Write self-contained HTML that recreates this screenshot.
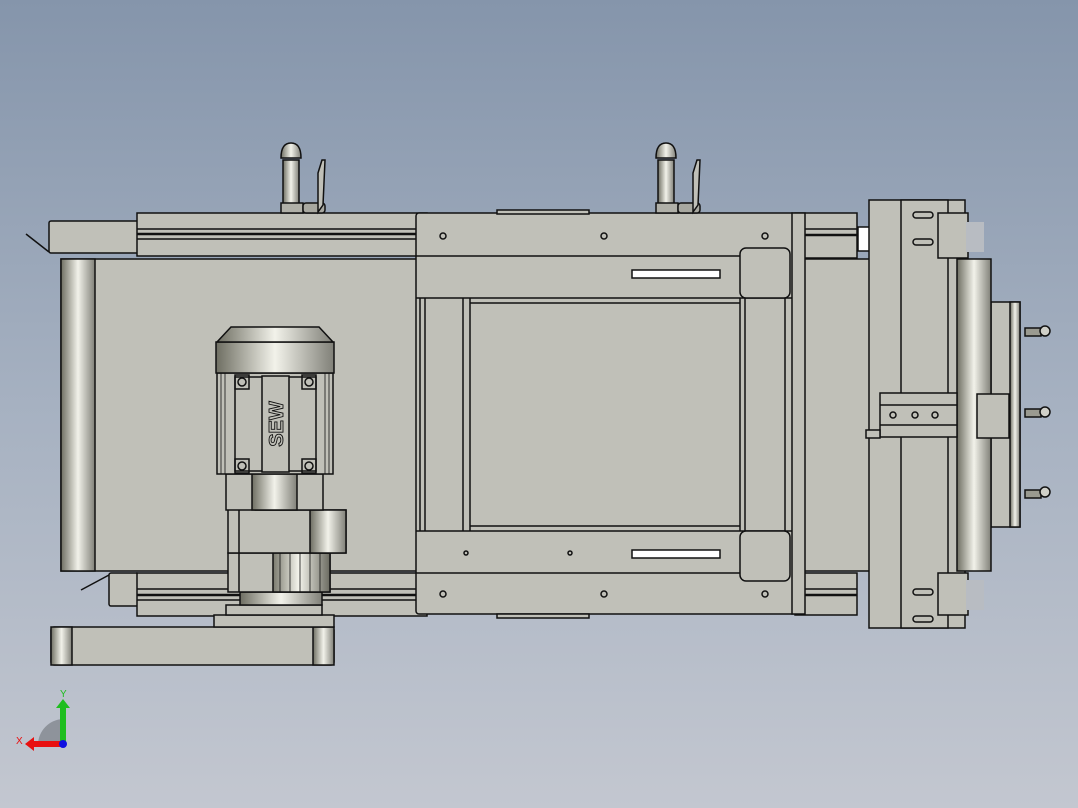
<!DOCTYPE html>
<html><head><style>
html,body{margin:0;padding:0;width:1078px;height:808px;overflow:hidden}
body{background:linear-gradient(#8595ab 0%,#a6b1c1 50%,#c3c7d0 100%)}
svg{position:absolute;left:0;top:0}
text{font-family:"Liberation Sans",sans-serif}
</style></head><body>
<svg width="1078" height="808" viewBox="0 0 1078 808" xmlns="http://www.w3.org/2000/svg">
<defs>
<linearGradient id="cylH" x1="0" x2="1" y1="0" y2="0">
<stop offset="0" stop-color="#6e6e62"/><stop offset=".5" stop-color="#f2f2ea"/><stop offset="1" stop-color="#808078"/></linearGradient>
<linearGradient id="cylH2" x1="0" x2="1" y1="0" y2="0">
<stop offset="0" stop-color="#7a7a6e"/><stop offset=".45" stop-color="#f4f4ec"/><stop offset="1" stop-color="#6a6a60"/></linearGradient>
</defs>
<g stroke="#111" stroke-width="1.5" fill="#c0c0b8">
<rect x="49" y="221" width="90" height="32" rx="2"/>
<line x1="26" y1="234" x2="49" y2="252"/>
<rect x="109" y="573" width="30" height="33" rx="2"/>
<line x1="81" y1="590" x2="109" y2="575"/>
<rect x="137" y="213" width="290" height="43"/>
<line x1="137" y1="229" x2="420" y2="229"/><line x1="137" y1="234" x2="420" y2="234" stroke-width="2.5"/><line x1="137" y1="239" x2="420" y2="239"/>
<rect x="137" y="573" width="290" height="43"/>
<line x1="137" y1="589" x2="420" y2="589"/><line x1="137" y1="595" x2="420" y2="595" stroke-width="2.5"/><line x1="137" y1="600" x2="420" y2="600"/>
<rect x="795" y="213" width="62" height="45"/>
<line x1="805" y1="229" x2="857" y2="229"/><line x1="805" y1="235" x2="857" y2="235" stroke-width="2.5"/>
<rect x="795" y="573" width="62" height="42"/>
<line x1="805" y1="589" x2="857" y2="589"/><line x1="805" y1="595" x2="857" y2="595" stroke-width="2.5"/>
<rect x="858" y="227" width="14" height="24" fill="#fff"/>
<rect x="61" y="259" width="830" height="312"/>
<rect x="61" y="259" width="34" height="312" fill="url(#cylH)"/>
<rect x="869" y="200" width="96" height="428"/>
<rect x="901" y="200" width="47" height="428"/>
<rect x="938" y="213" width="30" height="45"/><rect x="938" y="573" width="30" height="42"/>
<rect x="913" y="212" width="20" height="6" rx="3"/><rect x="913" y="239" width="20" height="6" rx="3"/>
<rect x="913" y="589" width="20" height="6" rx="3"/><rect x="913" y="616" width="20" height="6" rx="3"/>
<rect x="966" y="222" width="18" height="30" fill="#b8bcc2" stroke="none"/>
<rect x="966" y="580" width="18" height="30" fill="#b8bcc2" stroke="none"/>
<rect x="991" y="302" width="29" height="225"/>
<rect x="1010" y="302" width="10" height="225" fill="url(#cylH)"/>
<rect x="957" y="259" width="34" height="312" fill="url(#cylH)"/>
<g fill="#9a9a90">
<rect x="1025" y="328" width="16" height="8"/><circle cx="1045" cy="331" r="5" fill="#d0d0c8"/>
<rect x="1025" y="409" width="16" height="8"/><circle cx="1045" cy="412" r="5" fill="#d0d0c8"/>
<rect x="1025" y="490" width="16" height="8"/><circle cx="1045" cy="492" r="5" fill="#d0d0c8"/>
</g>
<rect x="880" y="393" width="77" height="44"/>
<line x1="880" y1="405" x2="957" y2="405"/><line x1="880" y1="425" x2="957" y2="425"/>
<rect x="866" y="430" width="14" height="8"/>
<circle cx="893" cy="415" r="3" fill="none"/><circle cx="915" cy="415" r="3" fill="none"/><circle cx="935" cy="415" r="3" fill="none"/>
<rect x="977" y="394" width="32" height="44"/>
<rect x="416" y="213" width="380" height="401" rx="3"/>
<rect x="497" y="210" width="92" height="4"/>
<rect x="497" y="614" width="92" height="4"/>
<line x1="416" y1="298" x2="796" y2="298"/><line x1="416" y1="531" x2="796" y2="531"/>
<line x1="416" y1="256" x2="740" y2="256"/><line x1="416" y1="573" x2="740" y2="573"/>
<line x1="420" y1="298" x2="420" y2="531"/><line x1="425" y1="298" x2="425" y2="531"/>
<line x1="463" y1="298" x2="463" y2="531"/><line x1="470" y1="298" x2="470" y2="531"/>
<line x1="470" y1="303" x2="740" y2="303"/><line x1="470" y1="526" x2="740" y2="526"/>
<line x1="740" y1="298" x2="740" y2="531"/><line x1="745" y1="298" x2="745" y2="531"/><line x1="785" y1="298" x2="785" y2="531"/>
<rect x="740" y="248" width="50" height="50" rx="6"/>
<rect x="740" y="531" width="50" height="50" rx="6"/>
<rect x="632" y="270" width="88" height="8" fill="#fff"/>
<rect x="632" y="550" width="88" height="8" fill="#fff"/>
<rect x="792" y="213" width="13" height="401"/>
<g fill="none"><circle cx="443" cy="236" r="3"/><circle cx="604" cy="236" r="3"/><circle cx="765" cy="236" r="3"/>
<circle cx="443" cy="594" r="3"/><circle cx="604" cy="594" r="3"/><circle cx="765" cy="594" r="3"/>
<circle cx="466" cy="553" r="2"/><circle cx="570" cy="553" r="2"/></g>
<rect x="283" y="160" width="16" height="45" fill="url(#cylH)"/>
<path d="M281 158 Q281 143 291 143 Q301 143 301 158 Z" fill="url(#cylH)"/>
<rect x="281" y="203" width="22" height="10" fill="#b0b0a8"/>
<rect x="303" y="203" width="22" height="10" fill="#a8a8a0" rx="3"/>
<path d="M318 212 L318 173 L322 160 L325 160 L323 205 Z"/>
<rect x="658" y="160" width="16" height="45" fill="url(#cylH)"/>
<path d="M656 158 Q656 143 666 143 Q676 143 676 158 Z" fill="url(#cylH)"/>
<rect x="656" y="203" width="22" height="10" fill="#b0b0a8"/>
<rect x="678" y="203" width="22" height="10" fill="#a8a8a0" rx="3"/>
<path d="M693 212 L693 173 L697 160 L700 160 L698 205 Z"/>
<rect x="51" y="627" width="283" height="38" rx="3"/>
<rect x="51" y="627" width="21" height="38" fill="url(#cylH)"/>
<rect x="313" y="627" width="21" height="38" fill="url(#cylH)"/>
<rect x="214" y="615" width="120" height="12"/>
<rect x="226" y="605" width="96" height="10"/>
<rect x="240" y="592" width="82" height="13" fill="url(#cylH)"/>
<rect x="228" y="553" width="102" height="39"/>
<rect x="273" y="553" width="57" height="39" fill="url(#cylH2)"/>
<g stroke-width=".8"><line x1="280" y1="553" x2="280" y2="592"/><line x1="290" y1="553" x2="290" y2="592"/><line x1="300" y1="553" x2="300" y2="592"/><line x1="310" y1="553" x2="310" y2="592"/><line x1="320" y1="553" x2="320" y2="592"/></g>
<path d="M228 507 L248 505 L255 510 L346 510 L346 553 L228 553 Z"/>
<rect x="310" y="510" width="36" height="43" fill="url(#cylH)"/>
<line x1="239" y1="507" x2="239" y2="592"/>
<rect x="226" y="474" width="97" height="36"/>
<rect x="252" y="474" width="45" height="36" fill="url(#cylH)"/>
<rect x="217" y="373" width="116" height="101"/>
<g stroke-width=".8"><line x1="221" y1="373" x2="221" y2="474"/><line x1="225" y1="373" x2="225" y2="474"/><line x1="329" y1="373" x2="329" y2="474"/><line x1="325" y1="373" x2="325" y2="474"/></g>
<rect x="235" y="377" width="81" height="94"/>
<rect x="262" y="376" width="27" height="96"/>
<g fill="none"><rect x="235" y="375" width="14" height="14"/><circle cx="242" cy="382" r="4"/>
<rect x="302" y="375" width="14" height="14"/><circle cx="309" cy="382" r="4"/>
<rect x="235" y="459" width="14" height="14"/><circle cx="242" cy="466" r="4"/>
<rect x="302" y="459" width="14" height="14"/><circle cx="309" cy="466" r="4"/></g>
<rect x="216" y="342" width="118" height="31" fill="url(#cylH)"/>
<path d="M231 327 L319 327 L333 342 L217 342 Z" fill="url(#cylH)"/>
</g>
<text x="0" y="0" transform="translate(283,424) rotate(-90)" text-anchor="middle" font-size="20" font-weight="bold" fill="#c0c0b8" stroke="#111" stroke-width=".9">SEW</text>
<path d="M38 745 A26 26 0 0 1 63 719 L63 745 Z" fill="#8e939b"/>
<rect x="60" y="706" width="6" height="38" fill="#1fbe1f"/>
<path d="M56 708 L63 699 L70 708 Z" fill="#1fbe1f"/>
<rect x="32" y="741" width="30" height="6" fill="#e81010"/>
<path d="M34 737 L25 744 L34 751 Z" fill="#e81010"/>
<circle cx="63" cy="744" r="4" fill="#1010e0"/>
<text x="60" y="697" font-size="10" fill="#1fbe1f">Y</text>
<text x="16" y="744" font-size="10" fill="#e81010">X</text>
</svg>
</body></html>
